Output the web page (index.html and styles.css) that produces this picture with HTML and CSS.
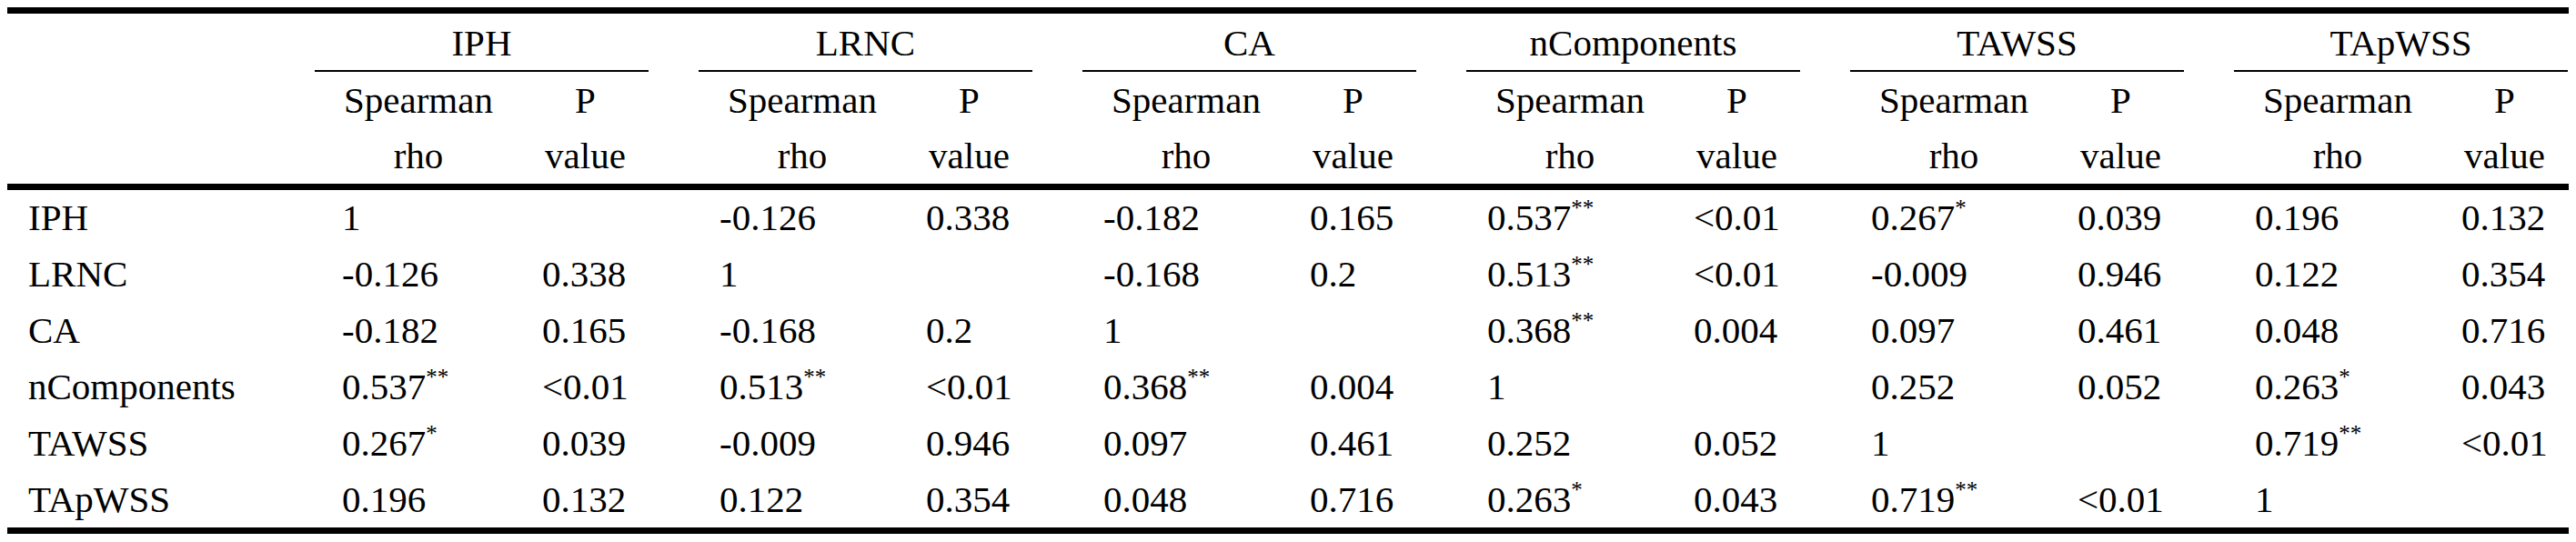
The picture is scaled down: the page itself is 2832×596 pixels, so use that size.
FILE: index.html
```html
<!DOCTYPE html>
<html lang="en">
<head>
<meta charset="utf-8">
<title>Spearman correlation table</title>
<link rel="stylesheet" href="styles.css">
</head>
<body>
<div class="corr">
  <div class="head">
    <div class="corner"></div>
    <div class="grp">IPH</div><div class="hgap"></div>
    <div class="grp">LRNC</div><div class="hgap"></div>
    <div class="grp">CA</div><div class="hgap"></div>
    <div class="grp">nComponents</div><div class="hgap"></div>
    <div class="grp">TAWSS</div><div class="hgap"></div>
    <div class="grp">TApWSS</div>
    <div class="sub">Spearman<br>rho</div><div class="sub">P<br>value</div>
    <div class="sub">Spearman<br>rho</div><div class="sub">P<br>value</div>
    <div class="sub">Spearman<br>rho</div><div class="sub">P<br>value</div>
    <div class="sub">Spearman<br>rho</div><div class="sub">P<br>value</div>
    <div class="sub">Spearman<br>rho</div><div class="sub">P<br>value</div>
    <div class="sub">Spearman<br>rho</div><div class="sub">P<br>value</div>
  </div>
  <div class="body">
    <div class="row">
      <div class="lab">IPH</div>
      <div class="rho g1">1</div><div class="p"></div><div class="gap"></div>
      <div class="rho">-0.126</div><div class="p">0.338</div><div class="gap"></div>
      <div class="rho">-0.182</div><div class="p">0.165</div><div class="gap"></div>
      <div class="rho">0.537<span class="sig">**</span></div><div class="p">&lt;0.01</div><div class="gap"></div>
      <div class="rho">0.267<span class="sig">*</span></div><div class="p">0.039</div><div class="gap"></div>
      <div class="rho">0.196</div><div class="p">0.132</div>
    </div>
    <div class="row">
      <div class="lab">LRNC</div>
      <div class="rho g1">-0.126</div><div class="p">0.338</div><div class="gap"></div>
      <div class="rho">1</div><div class="p"></div><div class="gap"></div>
      <div class="rho">-0.168</div><div class="p">0.2</div><div class="gap"></div>
      <div class="rho">0.513<span class="sig">**</span></div><div class="p">&lt;0.01</div><div class="gap"></div>
      <div class="rho">-0.009</div><div class="p">0.946</div><div class="gap"></div>
      <div class="rho">0.122</div><div class="p">0.354</div>
    </div>
    <div class="row">
      <div class="lab">CA</div>
      <div class="rho g1">-0.182</div><div class="p">0.165</div><div class="gap"></div>
      <div class="rho">-0.168</div><div class="p">0.2</div><div class="gap"></div>
      <div class="rho">1</div><div class="p"></div><div class="gap"></div>
      <div class="rho">0.368<span class="sig">**</span></div><div class="p">0.004</div><div class="gap"></div>
      <div class="rho">0.097</div><div class="p">0.461</div><div class="gap"></div>
      <div class="rho">0.048</div><div class="p">0.716</div>
    </div>
    <div class="row">
      <div class="lab">nComponents</div>
      <div class="rho g1">0.537<span class="sig">**</span></div><div class="p">&lt;0.01</div><div class="gap"></div>
      <div class="rho">0.513<span class="sig">**</span></div><div class="p">&lt;0.01</div><div class="gap"></div>
      <div class="rho">0.368<span class="sig">**</span></div><div class="p">0.004</div><div class="gap"></div>
      <div class="rho">1</div><div class="p"></div><div class="gap"></div>
      <div class="rho">0.252</div><div class="p">0.052</div><div class="gap"></div>
      <div class="rho">0.263<span class="sig">*</span></div><div class="p">0.043</div>
    </div>
    <div class="row">
      <div class="lab">TAWSS</div>
      <div class="rho g1">0.267<span class="sig">*</span></div><div class="p">0.039</div><div class="gap"></div>
      <div class="rho">-0.009</div><div class="p">0.946</div><div class="gap"></div>
      <div class="rho">0.097</div><div class="p">0.461</div><div class="gap"></div>
      <div class="rho">0.252</div><div class="p">0.052</div><div class="gap"></div>
      <div class="rho">1</div><div class="p"></div><div class="gap"></div>
      <div class="rho">0.719<span class="sig">**</span></div><div class="p">&lt;0.01</div>
    </div>
    <div class="row last">
      <div class="lab">TApWSS</div>
      <div class="rho g1">0.196</div><div class="p">0.132</div><div class="gap"></div>
      <div class="rho">0.122</div><div class="p">0.354</div><div class="gap"></div>
      <div class="rho">0.048</div><div class="p">0.716</div><div class="gap"></div>
      <div class="rho">0.263<span class="sig">*</span></div><div class="p">0.043</div><div class="gap"></div>
      <div class="rho">0.719<span class="sig">**</span></div><div class="p">&lt;0.01</div><div class="gap"></div>
      <div class="rho">1</div><div class="p"></div>
    </div>
  </div>
</div>
</body>
</html>
```
FILE: styles.css
```css
html, body {
  background: #ffffff;
}
body {
  margin: 8px;
  font-family: "Liberation Serif", serif;
  font-size: 41px;
  color: #000000;
}
.corr {
  width: 2816px;
  font-family: "Liberation Serif", serif;
}

.head,
.row {
  display: grid;
  grid-template-columns:
    338px
    228px 139px 55px
    228px 139px 55px
    228px 139px 55px
    228px 139px 55px
    228px 139px 55px
    228px 139px;
}

/* header */
.head {
  border-top: 7px solid #000;
  border-bottom: 7px solid #000;
}
.corner,
.hgap {
  grid-row: span 2;
}
.grp {
  grid-column: span 2;
  text-align: center;
  padding-top: 3px;
  line-height: 59px;
  border-bottom: 2px solid #000;
}
.sub {
  text-align: center;
  padding-top: 1px;
  line-height: 61px;
  white-space: nowrap;
}

/* body rows */
.row > div {
  line-height: 60px;
  padding-bottom: 2px;
  white-space: nowrap;
}
.lab {
  padding-left: 23px;
}
.row > .rho {
  padding-left: 23px;
}
.row > .rho.g1 {
  padding-left: 30px;
}
.row > .p {
  padding-left: 22px;
}
.row.last {
  border-bottom: 7px solid #000;
}
.row.last > div {
  padding-bottom: 1px;
}

.sig {
  font-size: 25px;
  vertical-align: 16px;
  line-height: 0;
}
```
